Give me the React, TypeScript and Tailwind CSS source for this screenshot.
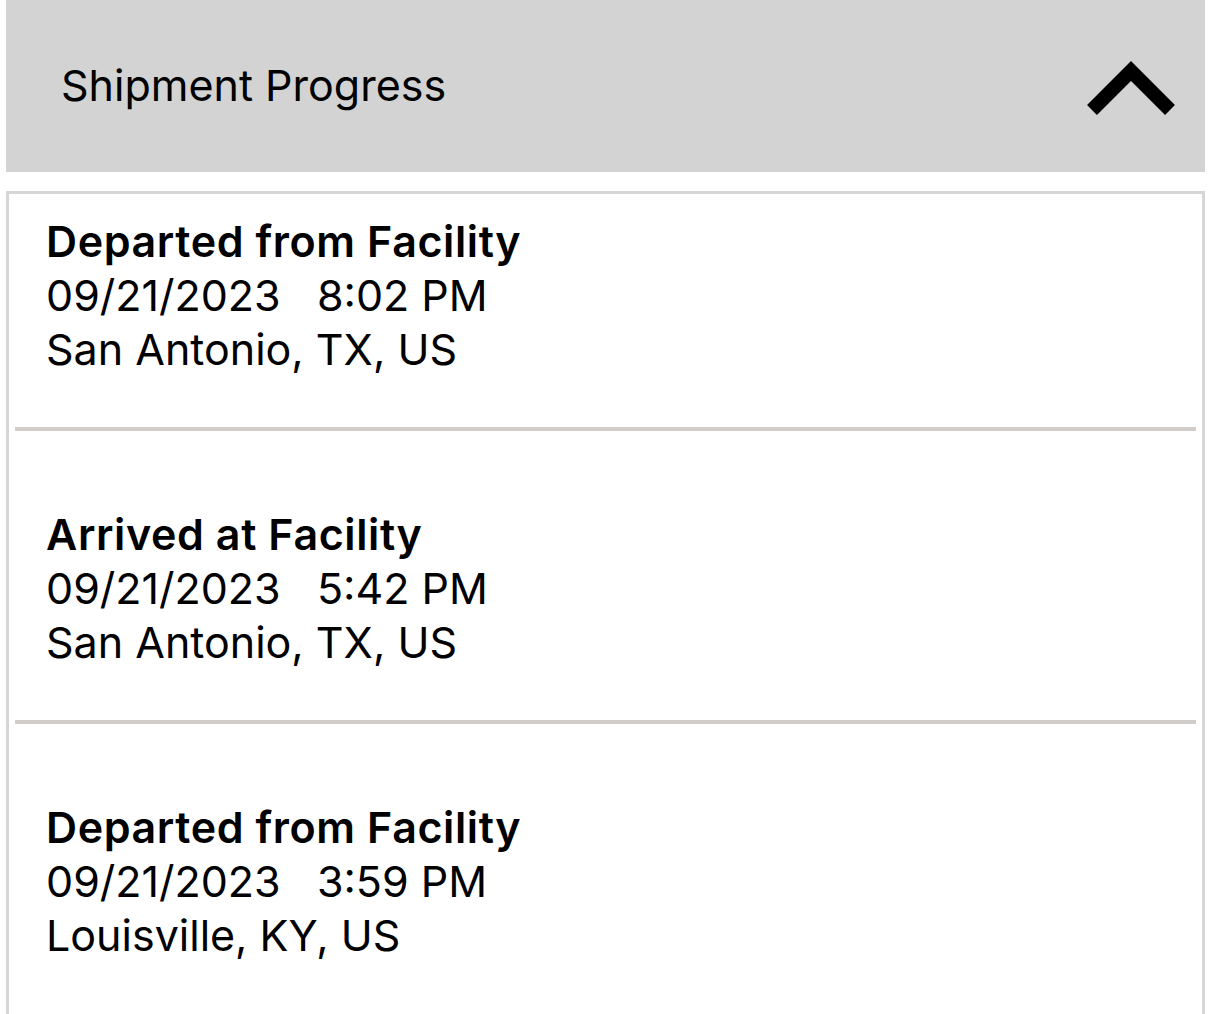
import React from 'react';

interface ProgressEvent {
  status: string;
  date: string;
  time: string;
  location: string;
}

const EVENTS: ProgressEvent[] = [
  { status: 'Departed from Facility', date: '09/21/2023', time: '8:02 PM', location: 'San Antonio, TX, US' },
  { status: 'Arrived at Facility', date: '09/21/2023', time: '5:42 PM', location: 'San Antonio, TX, US' },
  { status: 'Departed from Facility', date: '09/21/2023', time: '3:59 PM', location: 'Louisville, KY, US' },
];

const ChevronUp: React.FC = () => (
  <svg width="88" height="56" viewBox="0 0 88 56" fill="none">
    <path d="M5 51L44 12L83 51" stroke="black" strokeWidth="14" strokeLinecap="butt" strokeLinejoin="miter" />
  </svg>
);

export default function App() {
  return (
    <div className="min-h-screen bg-white text-black px-[6px] overflow-hidden" style={{ fontFamily: 'Inter, "Noto Sans", sans-serif' }}>
      <div className="h-[172px] bg-[#d3d3d3] flex items-center justify-between pl-[55px] pr-[30px]">
        <span className="text-[43px] leading-none pb-[2px]">Shipment Progress</span>
        <div className="pt-[1px]">
          <ChevronUp />
        </div>
      </div>

      <div className="mt-[19px] border-[3px] border-b-0 border-[#d6d6d6] min-h-[900px]">
        {EVENTS.map((ev, i) => (
          <div key={i}>
            {i > 0 && <div className="mx-[6px] h-[4px] bg-[#d2cdc8]" />}
            <div className={`px-[37px] pb-[51px] text-[43px] leading-[54px] ${i === 0 ? 'pt-[20px]' : 'pt-[76px]'}`}>
              <div className="font-semibold tracking-[0.6px]">{ev.status}</div>
              <div className="whitespace-pre">{`${ev.date}   ${ev.time}`}</div>
              <div>{ev.location}</div>
            </div>
          </div>
        ))}
      </div>
    </div>
  );
}
